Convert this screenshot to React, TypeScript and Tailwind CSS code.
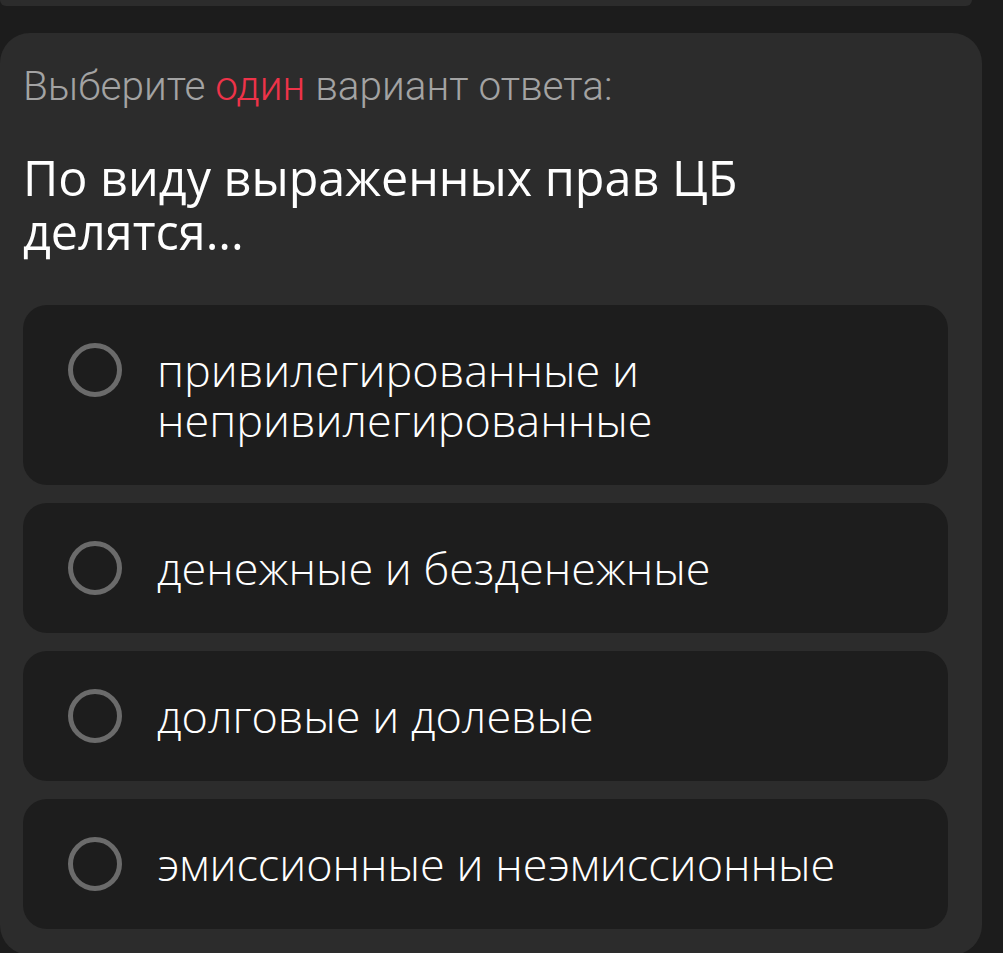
const options = [
  "привилегированные и непривилегированные",
  "денежные и безденежные",
  "долговые и долевые",
  "эмиссионные и неэмиссионные",
];

function Radio() {
  return (
    <div className="flex h-[50px] w-[54px] shrink-0 items-center justify-center">
      <div className="h-[54px] w-[54px] shrink-0 rounded-full border-[5px] border-[#6b6b6b]" />
    </div>
  );
}

export default function App() {
  return (
    <div className="h-[953px] overflow-hidden bg-[#1c1c1c]">
      <div className="h-[6px] w-[972px] rounded-b-[24px] bg-[#2c2c2c]" />

      <div className="mt-[27px] w-[982px] rounded-[30px] bg-[#2c2c2c] pb-[26px] pl-[23px] pr-[34px] pt-[29px]">
        <p className="font-['Roboto',sans-serif] text-[40.5px] font-light leading-[48px] text-[#a3a3a3]">
          Выберите <span className="text-[#ee3349]">один</span> вариант ответа:
        </p>

        <h1 className="mt-[40px] font-['Open_Sans',sans-serif] text-[48.5px] font-normal leading-[54px] text-white">
          По виду выраженных прав ЦБ делятся...
        </h1>

        <div className="mt-[47px] flex flex-col gap-[18px]">
          {options.map((text) => (
            <div
              key={text}
              className="flex items-start gap-[35px] rounded-[24px] bg-[#1d1d1d] py-[40px] pl-[45px] pr-[60px]"
            >
              <Radio />
              <span className="font-['Open_Sans',sans-serif] text-[45px] font-light leading-[50px] text-white">
                {text}
              </span>
            </div>
          ))}
        </div>
      </div>
    </div>
  );
}
